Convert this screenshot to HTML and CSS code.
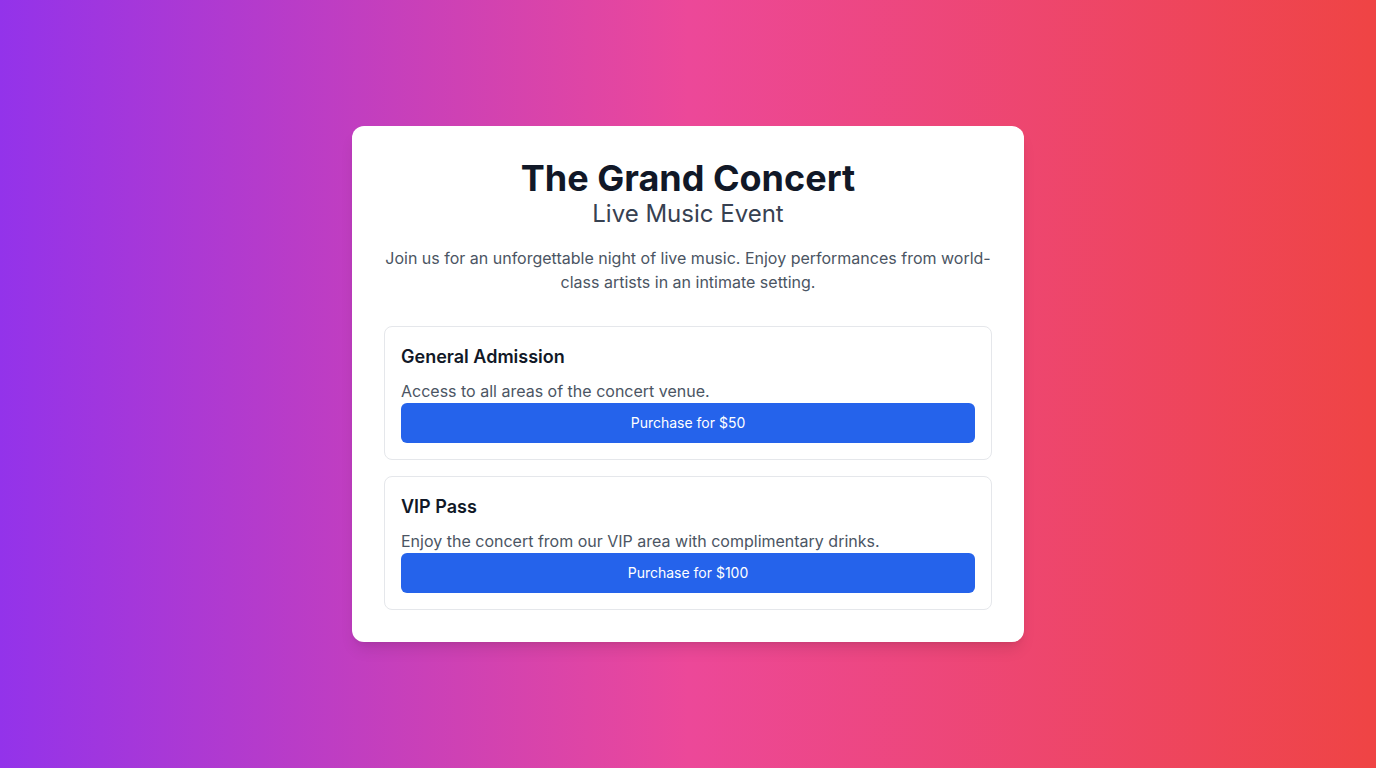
FILE: index.html
```html
<!DOCTYPE html>
<html lang="en">
<head>
<meta charset="utf-8">
<title>The Grand Concert</title>
<link rel="stylesheet" href="styles.css">
</head>
<body>
<main class="page">
  <section class="card">
    <h1 class="title">The Grand Concert</h1>
    <h2 class="subtitle">Live Music Event</h2>
    <p class="intro">Join us for an unforgettable night of live music. Enjoy performances from world-class artists in an intimate setting.</p>
    <div class="tickets">
      <div class="ticket">
        <h3 class="ticket-name">General Admission</h3>
        <p class="ticket-desc">Access to all areas of the concert venue.</p>
        <button class="buy">Purchase for $50</button>
      </div>
      <div class="ticket">
        <h3 class="ticket-name">VIP Pass</h3>
        <p class="ticket-desc">Enjoy the concert from our VIP area with complimentary drinks.</p>
        <button class="buy">Purchase for $100</button>
      </div>
    </div>
  </section>
</main>
</body>
</html>
```
FILE: styles.css
```css
* { box-sizing: border-box; }
html, body { margin: 0; padding: 0; }
body {
  font-family: Inter, "Noto Sans", "Liberation Sans", sans-serif;
  background: linear-gradient(to right, #9333ea, #ec4899, #ef4444);
  min-height: 100vh;
}
.page {
  min-height: 100vh;
  display: flex;
  align-items: center;
  justify-content: center;
}
.card {
  width: 672px;
  background: #fff;
  border-radius: 12px;
  padding: 32px;
  box-shadow: 0 10px 15px -3px rgba(0,0,0,0.1), 0 4px 6px -4px rgba(0,0,0,0.1);
  text-align: center;
}
.title {
  margin: 0;
  font-size: 36px;
  line-height: 40px;
  font-weight: 700;
  color: #111827;
}
.subtitle {
  margin: 0;
  font-size: 24px;
  line-height: 32px;
  font-weight: 400;
  color: #374151;
}
.intro {
  margin: 16px 0 0;
  font-size: 16px;
  line-height: 24px;
  color: #4b5563;
}
.tickets {
  margin-top: 32px;
  display: flex;
  flex-direction: column;
  gap: 16px;
  text-align: left;
}
.ticket {
  border: 1px solid #e5e7eb;
  border-radius: 8px;
  padding: 16px;
  display: flex;
  flex-direction: column;
}
.ticket-name {
  margin: 0 0 8px;
  font-size: 18px;
  line-height: 28px;
  font-weight: 600;
  color: #111827;
}
.ticket-desc {
  margin: 0;
  font-size: 16px;
  line-height: 24px;
  color: #4b5563;
}
.buy {
  display: block;
  width: 100%;
  padding: 8px 16px;
  border: 0;
  border-radius: 6px;
  background: #2563eb;
  color: #fff;
  font-family: inherit;
  font-size: 14px;
  line-height: 24px;
  font-weight: 400;
  cursor: pointer;
}
```
